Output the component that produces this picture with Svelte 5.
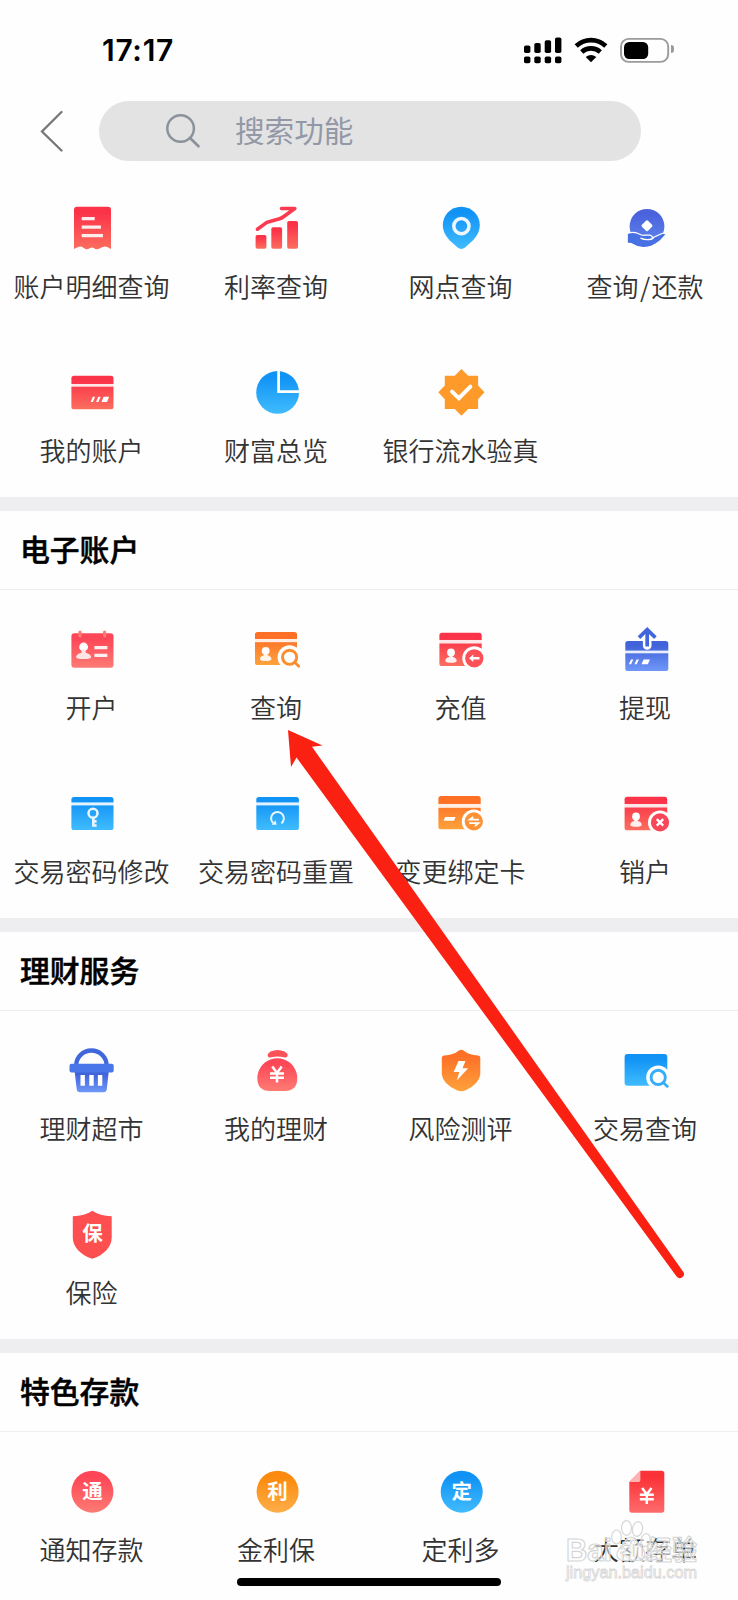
<script>
	const overview = [
		{ icon: 'bill', name: '账户明细查询' },
		{ icon: 'rate', name: '利率查询' },
		{ icon: 'pin', name: '网点查询' },
		{ icon: 'repay', name: '查询/还款', slash: true },
		{ icon: 'card', name: '我的账户' },
		{ icon: 'pie', name: '财富总览' },
		{ icon: 'verify', name: '银行流水验真' }
	];

	const sections = [
		{
			title: '电子账户',
			items: [
				{ icon: 'open', name: '开户' },
				{ icon: 'lookup', name: '查询' },
				{ icon: 'topup', name: '充值' },
				{ icon: 'withdraw', name: '提现' },
				{ icon: 'key', name: '交易密码修改' },
				{ icon: 'reset', name: '交易密码重置' },
				{ icon: 'rebind', name: '变更绑定卡' },
				{ icon: 'close', name: '销户' }
			]
		},
		{
			title: '理财服务',
			items: [
				{ icon: 'basket', name: '理财超市' },
				{ icon: 'bag', name: '我的理财' },
				{ icon: 'risk', name: '风险测评' },
				{ icon: 'trades', name: '交易查询' },
				{ icon: 'insure', name: '保险' }
			]
		},
		{
			title: '特色存款',
			items: [
				{ icon: 'round', name: '通知存款', char: '通', fill: 'rose', cx: 24.4 },
				{ icon: 'round', name: '金利保', char: '利', fill: 'amber', cx: 24.6 },
				{ icon: 'round', name: '定利多', char: '定', fill: 'sky', cx: 24.7 },
				{ icon: 'slip', name: '大额存单' }
			]
		}
	];

	// vertical gradients, top colour to bottom colour
	const gradients = [
		['red', '#fb3349', '#fb6e5e'],
		['rose', '#fd4657', '#fd7b74'],
		['orange', '#fd7026', '#fda23c'],
		['amber', '#fb8a0e', '#fdae48'],
		['sky', '#1193f5', '#40bcfd'],
		['blue', '#4163da', '#6f97f8'],
		['indigo', '#4a62dc', '#5f86ec'],
		['sheet', '#fb3238', '#fd6b6b']
	];
</script>

{#snippet person(x, y)}
	<circle cx={x} cy={y} r="3.9" fill="#fff" />
	<path
		d="M{x - 1.7} {y + 2}h3.4v2.4q4 1 4 3.8 0 2-5.7 2t-5.7-2q0-2.8 4-3.8z"
		fill="#fff"
		opacity=".9"
	/>
{/snippet}

{#snippet plate(x, y, w, h, band, bandH, fill)}
	<rect {x} {y} width={w} height={h} rx="2.6" fill="url(#{fill})" />
	<rect x={x - 0.5} y={band} width={w + 1} height={bandH} fill="#fff" opacity=".88" />
{/snippet}

{#snippet lens(x, y, fill)}
	<circle cx={x} cy={y} r="12" fill="#fff" />
	<circle cx={x} cy={y} r="7.1" fill="none" stroke={fill} stroke-width="2.9" />
	<path d="M{x + 5} {y + 5}l4.2 4" stroke={fill} stroke-width="2.7" stroke-linecap="round" />
{/snippet}

{#snippet badge(x, y, fill)}
	<circle cx={x} cy={y} r="12" fill="#fff" />
	<circle cx={x} cy={y} r="9.1" {fill} />
{/snippet}

{#snippet yen(x, y)}
	<path
		d="M{x - 4.7} {y - 8}l4.7 6.3 4.7-6.3M{x - 7} {y - 1.2}h14M{x - 7} {y + 3.2}h14M{x} {y - 2}v10"
		fill="none"
		stroke="#fff"
		stroke-width="2.5"
	/>
{/snippet}

{#snippet glyph(item)}
	<svg class="icon" viewBox="0 0 48 48" aria-hidden="true">
		{#if item.icon === 'bill'}
			<path
				d="M9 1.7h31q3 0 3 3v39.2l-3.8-2q-2.200-1-4.400 0l-4.400 2q-1.600.6-3.200 0l-1.400-.8q-1.800-1-3.600-.2-3.200 1.800-4.800 1l-3.200-2q-2-1-4 0L6 43.900V4.700q0-3 3-3z"
				fill="url(#red)"
			/>
			<path d="M13.700 13.600h13M13.700 22.100h19.200M13.700 30.600h21.200" stroke="#fff" stroke-width="3.200" opacity=".9" />
		{:else if item.icon === 'rate'}
			<rect x="2.600" y="30" width="10.800" height="13.800" rx="1.800" fill="url(#red)" />
			<rect x="18.300" y="22.300" width="10.800" height="21.500" rx="1.800" fill="url(#red)" />
			<rect x="34.200" y="16" width="10.800" height="27.800" rx="1.800" fill="url(#red)" />
			<path
				d="M4.400 24.200l8.400-6.100q1.800-1.200 4-1.700l9-2.300q2.800-.8 5-2.600l11-8H28.500"
				fill="none"
				stroke="#fb3a4f"
				stroke-width="3.600"
				stroke-linecap="round"
				stroke-linejoin="round"
			/>
		{:else if item.icon === 'pin'}
			<path
				d="M24.300 1.700c10.600 0 18.500 8.300 18.500 18.400 0 6.400-3.300 11.600-7 15.500l-7.800 7q-3.700 2.800-7.400 0l-7.800-7c-3.700-3.900-7-9.100-7-15.500C5.800 10 13.700 1.700 24.300 1.700z"
				fill="url(#sky)"
			/>
			<circle cx="24.400" cy="21.200" r="7.600" fill="none" stroke="#eef7ff" stroke-width="3.500" />
		{:else if item.icon === 'repay'}
			<circle cx="25" cy="21.300" r="17.400" fill="url(#indigo)" />
			<path
				d="M5.200 28.500q7-2.400 12 .5 2.500 1.600 6 1.200h4q3 .2 3.300 2.600 6-2.700 9.500-4.300 3-1 3.800 1-2 2.600-6.200 6.800-7.600 6.300-15.600 6.400-6 .2-10.500-3-3-1.800-6.300-1.300z"
				fill="#4771e3"
				stroke="#fff"
				stroke-width="1.200"
			/>
			<path d="M18.500 33.200q4 1.900 9 1.300 2.600-.2 4-1.800" fill="none" stroke="#fff" stroke-width="1.300" />
			<rect x="20.700" y="16.400" width="8.600" height="8.600" rx="1.500" fill="#fff" transform="rotate(45 25 20.7)" />
		{:else if item.icon === 'card'}
			{@render plate(3.4, 6.7, 42.1, 33.6, 15, 2.7, 'red')}
			<path d="M24.800 27.800h2.300l-2.200 5.200h-2.300zM30.300 27.800h2.300l-2.200 5.200h-2.300zM35.600 27.800h5.600l-2.200 5.200h-5.600z" fill="#fff" />
		{:else if item.icon === 'pie'}
			<circle cx="24.600" cy="23.400" r="21.400" fill="url(#sky)" />
			<path d="M25.600 1v21.700H47" fill="none" stroke="#fff" stroke-width="2.700" />
		{:else if item.icon === 'verify'}
			<path
				d="M24.400 0l6.800 6.700h9.900v9.900l6.400 6.700-6.400 6.900V40h-9.900l-6.800 6.800-6.700-6.800H7.800v-9.800l-6.500-6.900 6.500-6.700V6.700h9.900z"
				fill="#fd9a2a"
			/>
			<path d="M15 22.600l6.900 6.600 11.500-11.600" fill="none" stroke="#fff" stroke-width="4" stroke-linecap="round" />
		{:else if item.icon === 'open'}
			<rect x="3.400" y="7.300" width="42.100" height="34.400" rx="3" fill="url(#rose)" />
			<path d="M12 6v4M36.600 6v4" stroke="#fd7b74" stroke-width="3.200" stroke-linecap="round" />
			<circle cx="15.600" cy="21" r="4.400" fill="#fff" />
			<path d="M13.600 23.500h4v3.300q5.300 1.300 5.500 4.500 0 1.800-7.500 1.800t-7.500-1.800q.2-3.200 5.500-4.500z" fill="#ffe6e6" />
			<path d="M26.400 21.700h13M26.400 29.400h13" stroke="#fff" stroke-width="3.200" opacity=".9" />
		{:else if item.icon === 'lookup'}
			{@render plate(2, 6, 42, 33, 13, 3.2, 'orange')}
			{@render person(12.7, 24.8)}
			{@render lens(36.6, 31.3, '#fb8d2c')}
		{:else if item.icon === 'topup'}
			{@render plate(2.4, 6.7, 42.3, 33.3, 14, 3.5, 'red')}
			{@render person(14, 26.5)}
			{@render badge(37.3, 32.3, '#fb5055')}
			<path d="M32 32.300l4.300-3.700v2.500h6.200v2.500h-6.200v2.500z" fill="#fff" />
		{:else if item.icon === 'withdraw'}
			{@render plate(3.3, 15, 43, 30, 24.6, 2.7, 'blue')}
			<path d="M25.200 9v10.500" stroke="#fff" stroke-width="8.600" stroke-linecap="round" />
			<path d="M25.200 4v16.600M17 11.600l8.200-8 8.200 8" fill="none" stroke="#4166dc" stroke-width="3.700" />
			<path d="M7 33.400h2.300l-2.200 4.900H4.800zM12.600 33.400h2.300l-2.200 4.900h-2.300zM19.600 33.400h6.400l-2.200 4.900h-6.400z" fill="#fff" transform="translate(2 0)" />
		{:else if item.icon === 'key'}
			{@render plate(3.4, 7, 42.1, 33, 12.4, 3, 'sky')}
			<circle cx="25" cy="23.200" r="4.500" fill="none" stroke="#eaf6ff" stroke-width="2.500" />
			<path d="M25.300 27.500v9.200M25 31.400h3.600M25 35.500h3.600" stroke="#eaf6ff" stroke-width="2.600" />
		{:else if item.icon === 'reset'}
			{@render plate(3.3, 7, 42.6, 33, 12.4, 3, 'sky')}
			<path d="M28.400 33.400a6.400 6.400 0 1 0-8.200-.3" fill="none" stroke="#eaf6ff" stroke-width="2" />
			<path d="M18.600 34.800h5l-1-4.500z" fill="#eaf6ff" />
		{:else if item.icon === 'rebind'}
			{@render plate(1.4, 6, 42.3, 33.3, 14, 3.8, 'orange')}
			<path d="M8.200 27h10.400l-1.600 3.800H6.600z" fill="#fff" />
			{@render badge(36.8, 31.4, '#fd9136')}
			<path d="M42 29.600H32.800l3.400-2.600M32.200 33.200h9.200l-3.400 2.800" fill="none" stroke="#fff" stroke-width="1.800" />
		{:else if item.icon === 'close'}
			{@render plate(2.6, 6.7, 42.6, 33.6, 14, 3.5, 'red')}
			{@render person(14, 26.5)}
			{@render badge(38, 32.4, '#f9475a')}
			<path d="M34.800 29.200l6.400 6.400m0-6.400l-6.400 6.400" stroke="#fff" stroke-width="2.400" />
		{:else if item.icon === 'basket'}
			<path d="M8.200 18.500a15.200 15 0 0 1 30.400 0" fill="none" stroke="#4068dc" stroke-width="4.300" />
			<path d="M6.600 24h34.200l-2 18.300q-.3 3-3.300 3H12q-3 0-3.300-3z" fill="url(#blue)" />
			<rect x="1.500" y="16.700" width="44.200" height="8.900" rx="2" fill="#4976e8" />
			<path d="M14.700 28v10.800M23.500 28v10.800M32.100 28v10.800" stroke="#fff" stroke-width="4.400" />
		{:else if item.icon === 'bag'}
			<path d="M17.500 4.500q7-3 14 0l2.600 2q1.300 1.500 0 3.200-1.100 1.200-3 .6-6.500-1.400-13 0-2 .6-3-.6-1.200-1.700.2-3.200z" fill="#fb5158" />
			<path d="M17.500 12.400q6.800-2.200 13.600 0C38.500 14.800 44.300 22.700 44.300 30.800q0 13.200-12.500 13.200h-15q-12.500 0-12.500-13.200C4.300 22.700 10.100 14.800 17.500 12.400z" fill="url(#rose)" />
			{@render yen(24, 27.6)}
		{:else if item.icon === 'risk'}
			<path
				d="M21.500 3.700q2.700-2 5.500 0 5 4.300 13.800 4.800 2.500 0 2.500 2.500v16.800q-1.500 9.600-14.500 15.400-4.500 2-9 0Q6.300 37.400 4.800 27.800V11q0-2.500 2.500-2.500Q16.500 8 21.500 3.700z"
				fill="url(#orange)"
			/>
			<path d="M21.500 14h7l-3 7.300h5.700L19.800 33.500l2.500-8.500h-5.700z" fill="#fff" />
		{:else if item.icon === 'trades'}
			<rect x="2.600" y="7" width="42.700" height="31.700" rx="3" fill="url(#sky)" />
			{@render lens(36.2, 30.4, '#35adf8')}
		{:else if item.icon === 'insure'}
			<path
				d="M24.300-.2q7.500 5.300 19.400 5.400v21.500c0 9-7.500 17.300-19.400 21C12.400 44 4.800 35.700 4.800 26.700V5.200Q16.800 5.100 24.300-.2z"
				fill="#fd4f50"
			/>
			<text class="mark" x="24.500" y="30.300">保</text>
		{:else if item.icon === 'round'}
			<circle cx={item.cx} cy="23.700" r="21" fill="url(#{item.fill})" />
			<text class="mark" x={item.cx} y="31">{item.char}</text>
		{:else if item.icon === 'slip'}
			<path d="M18.400 2.700h21.300q2.600 0 2.600 2.600v36.800q0 2.600-2.600 2.600H9.900q-2.600 0-2.600-2.600V14z" fill="url(#sheet)" />
			<path d="M18.400 2.700v8.700q0 2.600-2.600 2.600H7.300z" fill="#fdb3b3" />
			{@render yen(24.8, 28)}
		{/if}
	</svg>
{/snippet}

{#snippet grid(items)}
	<div class="grid">
		{#each items as item}
			<a class="cell" href="#{item.icon}">
				{@render glyph(item)}
				{#if item.slash}
					<span>查询<b>/</b>还款</span>
				{:else}
					<span>{item.name}</span>
				{/if}
			</a>
		{/each}
	</div>
{/snippet}

<svg class="defs" width="0" height="0" aria-hidden="true">
	<defs>
		{#each gradients as [id, from, to]}
			<linearGradient {id} x1="0" y1="0" x2="0" y2="1">
				<stop offset=".15" stop-color={from} />
				<stop offset="1" stop-color={to} />
			</linearGradient>
		{/each}
	</defs>
</svg>

<main class="screen">
	<div class="status">
		<time>17:17</time>
		<svg width="150" height="32" viewBox="0 0 150 32" aria-hidden="true">
			<rect x="4" y="12.500" width="6.400" height="7.500" rx="1.800" />
			<rect x="14.300" y="10" width="6.400" height="10" rx="1.800" />
			<rect x="24.700" y="7.200" width="6.400" height="12.800" rx="1.800" />
			<rect x="35" y="4.500" width="6.400" height="15.500" rx="1.800" />
			{#each [4, 14.3, 24.7, 35] as x}
				<rect {x} y="23.500" width="6.400" height="6.700" rx="1.800" />
			{/each}
			<g fill="none" stroke="#000" stroke-width="4.600">
				<path d="M56.200 13a21.500 21.500 0 0 1 29.600 0" />
				<path d="M61.700 19a13.800 13.800 0 0 1 18.600 0" />
			</g>
			<path d="M71 29.300l-5.300-5.300q5.300-4 10.600 0z" />
			<rect x="101" y="5.900" width="47.200" height="23" rx="7.600" fill="none" stroke="#9b9b9b" stroke-width="1.900" />
			<rect x="104" y="9" width="24.200" height="17" rx="5.200" />
		</svg>
		<i class="nub"></i>
	</div>

	<header class="bar">
		<svg class="back" width="24" height="42" viewBox="0 0 24 42" aria-label="返回">
			<path d="M22.500 2L3 21.500 22.500 40.500" fill="none" stroke="#777" stroke-width="2.300" stroke-linecap="round" />
		</svg>
		<div class="search">
			<svg width="36" height="36" viewBox="0 0 36 36" aria-hidden="true">
				<circle cx="15.600" cy="15.500" r="13.300" fill="none" stroke="#8c929b" stroke-width="2.500" />
				<path d="M25 25l8.500 8.200" stroke="#8c929b" stroke-width="2.700" stroke-linecap="round" />
			</svg>
			<span>搜索功能</span>
		</div>
	</header>

	{@render grid(overview)}

	{#each sections as section}
		<section>
			<h2>{section.title}</h2>
			{@render grid(section.items)}
		</section>
	{/each}

	<div class="home"></div>

	<svg class="overlay" viewBox="0 0 738 1600" aria-hidden="true">
		<path
			d="M288 730l34.500 15.500-10.500 1.200L683 1271.500a4 4 0 0 1-6.400 5L296.500 757.500 291 767z"
			fill="#fb2112"
		/>
		<g class="watermark">
			<text class="brand" x="566" y="1561" textLength="46" lengthAdjust="spacingAndGlyphs">Bai</text>
			<text class="brand" x="620" y="1561" textLength="33" lengthAdjust="spacingAndGlyphs">du</text>
			<text class="brand cn" x="647" y="1560" textLength="50" lengthAdjust="spacingAndGlyphs">经验</text>
			<ellipse cx="616.500" cy="1537" rx="4.800" ry="7" />
			<ellipse cx="626.500" cy="1528" rx="5" ry="7.300" />
			<ellipse cx="637.500" cy="1529" rx="5" ry="7.300" transform="rotate(10 637 1529)" />
			<ellipse cx="645.500" cy="1540" rx="4.600" ry="6.500" transform="rotate(15 645 1540)" />
			<path d="M631 1537q4 0 7 6l5 6q5 8-3 11-4 1-9 0-6 1-10 0-7-3-2-11l5-6q3-6 7-6z" />
			<text class="url" x="566" y="1578" textLength="131" lengthAdjust="spacingAndGlyphs">jingyan.baidu.com</text>
		</g>
	</svg>
</main>

<style>
	:global(body) {
		background: #fff;
	}

	.defs {
		position: absolute;
	}

	.screen {
		position: relative;
		width: 738px;
		height: 1600px;
		overflow: hidden;
		background: #fefefe;
		color: #333;
		font-family: 'Noto Sans CJK SC', sans-serif;
	}

	.status {
		display: flex;
		align-items: center;
		box-sizing: border-box;
		height: 98px;
		padding-left: 102px;
	}

	.status time {
		width: 418px;
		padding-top: 2px;
		color: #000;
		font: 600 30px/36px Inter, sans-serif;
		letter-spacing: 0.7px;
	}

	.nub {
		width: 3px;
		height: 8px;
		margin-left: 1px;
		border-radius: 0 4px 4px 0;
		background: #9b9b9b;
	}

	.bar {
		display: flex;
		align-items: center;
		box-sizing: border-box;
		height: 71px;
		padding: 0 0 5px 39px;
	}

	.search {
		display: flex;
		align-items: center;
		width: 542px;
		height: 60px;
		margin-left: 36px;
		border-radius: 30px;
		background: #e3e3e3;
		color: #9298a6;
		font-size: 29.6px;
		line-height: 58px;
	}

	.search svg {
		margin: 0 34px 0 66px;
	}

	.search span {
		height: 60px;
	}

	.grid {
		display: grid;
		grid-template-columns: repeat(4, 1fr);
		grid-auto-rows: 164px;
	}

	.cell {
		display: flex;
		flex-direction: column;
		align-items: center;
		padding-top: 36px;
		color: inherit;
		text-decoration: none;
	}

	.icon {
		width: 48px;
		height: 48px;
		overflow: visible;
	}

	.cell span {
		margin: 13px 1.5px 0 0;
		font-size: 26px;
		font-weight: 350;
		line-height: 40px;
		white-space: nowrap;
	}

	.cell b {
		margin: 0 1.5px;
		font-weight: inherit;
	}

	.mark {
		fill: #fff;
		font-size: 20.5px;
		font-weight: 700;
		text-anchor: middle;
	}

	section {
		border-top: 14px solid #eeeef1;
	}

	h2 {
		height: 78px;
		margin: 0;
		padding-left: 20px;
		border-bottom: 1px solid #eee;
		color: #000;
		font-size: 29.8px;
		font-weight: 500;
		line-height: 74px;
		-webkit-text-stroke: 0.5px #000;
	}

	.home {
		position: absolute;
		left: 237px;
		bottom: 14px;
		width: 264px;
		height: 8.5px;
		border-radius: 5px;
		background: #000;
	}

	.overlay {
		position: absolute;
		inset: 0;
		width: 738px;
		height: 1600px;
		pointer-events: none;
	}

	.watermark {
		fill: #fff;
		fill-opacity: 0.55;
		stroke: #d6d6d6;
		stroke-width: 1.2;
	}

	.brand {
		font: 700 31px 'Liberation Sans', sans-serif;
	}

	.cn {
		font: 700 27px 'Noto Sans CJK SC', sans-serif;
	}

	.url {
		font: 16px 'Liberation Sans', sans-serif;
		stroke-width: 0.8;
	}
</style>
